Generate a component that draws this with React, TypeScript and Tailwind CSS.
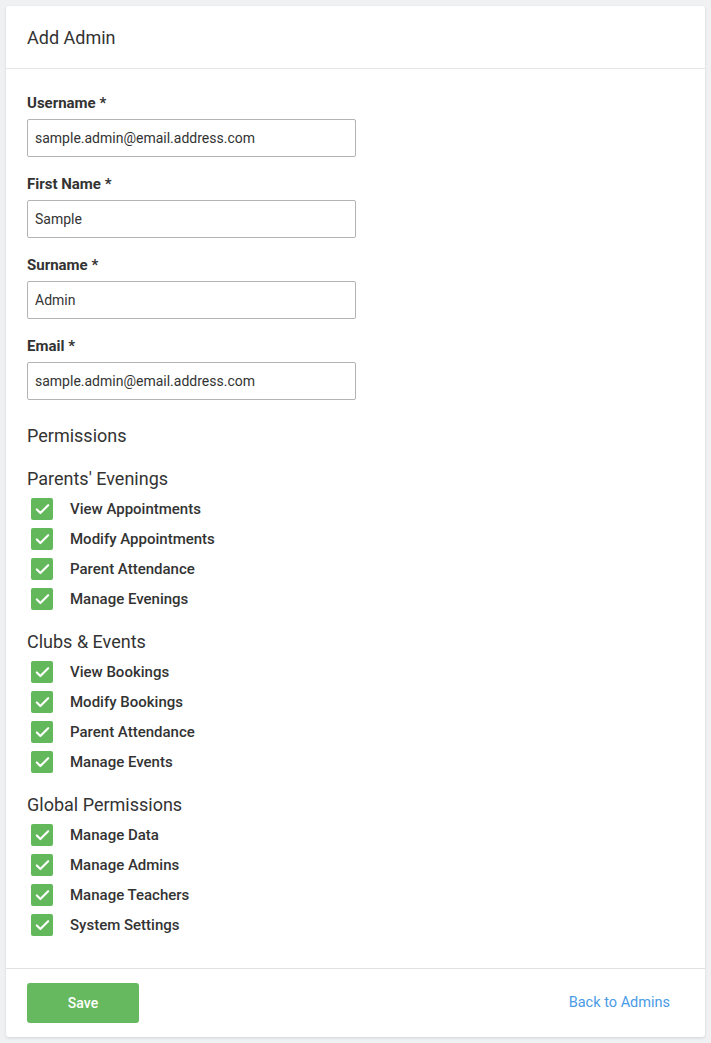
import { Check } from 'lucide-react';

const fields = [
  { label: 'Username *', value: 'sample.admin@email.address.com' },
  { label: 'First Name *', value: 'Sample' },
  { label: 'Surname *', value: 'Admin' },
  { label: 'Email *', value: 'sample.admin@email.address.com' },
];

const groups = [
  {
    title: "Parents' Evenings",
    items: ['View Appointments', 'Modify Appointments', 'Parent Attendance', 'Manage Evenings'],
  },
  {
    title: 'Clubs & Events',
    items: ['View Bookings', 'Modify Bookings', 'Parent Attendance', 'Manage Events'],
  },
  {
    title: 'Global Permissions',
    items: ['Manage Data', 'Manage Admins', 'Manage Teachers', 'System Settings'],
  },
];

export default function App() {
  return (
    <div className="min-h-[1043px] bg-[#f0f1f3] p-[6px] text-[#333] font-['Roboto',sans-serif]">
      <div className="bg-white rounded-[3px] shadow-[0_1px_3px_rgba(0,0,0,0.12)]">
        {/* Header */}
        <div className="h-[63px] px-[21px] flex items-center border-b border-[#e5e6e8]">
          <h1 className="text-[18px] text-[#333]">Add Admin</h1>
        </div>

        {/* Body */}
        <div className="px-[21px] pt-[24px] pb-[28px]">
          {fields.map((f) => (
            <div key={f.label} className="mb-[17px]">
              <label className="block text-[15px] font-bold leading-[20px] mb-[6px] text-[#333]">
                {f.label}
              </label>
              <input
                readOnly
                value={f.value}
                className="w-[329px] h-[38px] px-[7px] border border-[#b3b3b3] rounded-[2px] text-[14px] text-[#333] outline-none"
              />
            </div>
          ))}

          <h2 className="text-[18px] leading-[22px] mt-[25px] text-[#333]">Permissions</h2>

          {groups.map((g, i) => (
            <div key={g.title} className={i === 0 ? 'mt-[21px]' : 'mt-[17px]'}>
              <h3 className="text-[18px] leading-[22px] text-[#333]">{g.title}</h3>
              <div className="mt-[4px]">
                {g.items.map((item) => (
                  <div key={item} className="h-[30px] flex items-center pl-[4px]">
                    <span className="w-[22px] h-[22px] rounded-[2px] bg-[#62b85a] flex items-center justify-center">
                      <Check className="w-[17px] h-[17px] text-white" strokeWidth={3} />
                    </span>
                    <span className="ml-[17px] text-[15px] font-medium text-[#333]">{item}</span>
                  </div>
                ))}
              </div>
            </div>
          ))}
        </div>

        {/* Footer */}
        <div className="border-t border-[#e0e1e3] px-[21px] pt-[14px] pb-[14px] flex items-center justify-between">
          <button className="w-[112px] h-[40px] rounded-[3px] bg-[#66b95e] text-white text-[14px] font-medium">
            Save
          </button>
          <a className="mr-[14px] text-[14.5px] text-[#4a9be6] cursor-pointer">Back to Admins</a>
        </div>
      </div>
    </div>
  );
}
